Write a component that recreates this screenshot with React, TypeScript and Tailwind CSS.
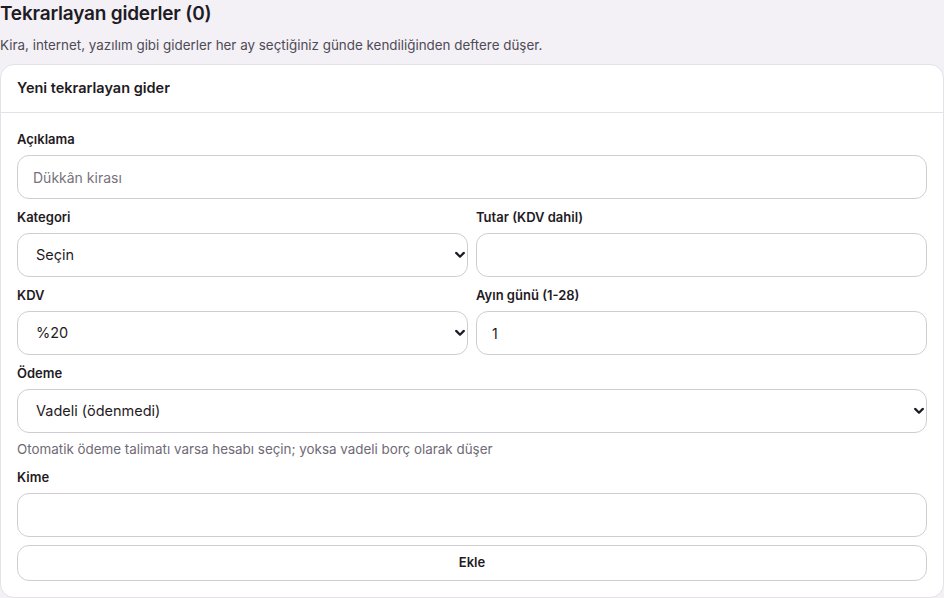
import React from "react";

const font = { fontFamily: "Inter, 'Noto Sans', sans-serif" };

function Label({ children }: { children: React.ReactNode }) {
  return <label className="block text-[13px] leading-5 font-semibold text-[#1f1b24] mb-1.5">{children}</label>;
}

const inputCls =
  "block w-full h-[44px] rounded-[12px] border border-[#cfcdd2] bg-white px-[15px] text-[14px] text-[#1f1b24] placeholder:text-[#77727c] outline-none";

function Select({ children, defaultValue }: { children: React.ReactNode; defaultValue: string }) {
  return (
    <div className="relative">
      <select
        defaultValue={defaultValue}
        className="block w-full h-[44px] appearance-none rounded-[12px] border border-[#cfcdd2] bg-white pl-[18px] pr-8 text-[14.5px] text-[#1f1b24] outline-none"
      >
        {children}
      </select>
      <svg
        className="pointer-events-none absolute right-[3px] top-1/2 -translate-y-1/2"
        width="10"
        height="7"
        viewBox="0 0 10 7"
        fill="none"
      >
        <path d="M1.2 1.4 L5 5.2 L8.8 1.4" stroke="#1f1b24" strokeWidth="2.2" strokeLinecap="round" strokeLinejoin="round" />
      </svg>
    </div>
  );
}

export default function App() {
  return (
    <div className="min-h-[598px] bg-[#f3f1f6] text-[#1f1b24]" style={font}>
      <h1 className="text-[19px] leading-7 font-semibold tracking-[-0.2px]">Tekrarlayan giderler (0)</h1>
      <p className="mt-[7px] text-[13.4px] leading-5 text-[#4f4a55]">
        Kira, internet, yazılım gibi giderler her ay seçtiğiniz günde kendiliğinden deftere düşer.
      </p>
      <div className="mt-[9px] rounded-[14px] border border-[#e4e1e8] bg-white">
        <div className="pt-[13px] pb-[14px] px-4 border-b border-[#e4e1e8]">
          <h2 className="text-[14.5px] leading-5 font-semibold">Yeni tekrarlayan gider</h2>
        </div>
        <div className="p-4 flex flex-col gap-2">
          <div>
            <Label>Açıklama</Label>
            <input className={inputCls} placeholder="Dükkân kirası" />
          </div>
          <div className="grid grid-cols-2 gap-2">
            <div>
              <Label>Kategori</Label>
              <Select defaultValue="">
                <option value="">Seçin</option>
              </Select>
            </div>
            <div>
              <Label>Tutar (KDV dahil)</Label>
              <input className={inputCls} />
            </div>
          </div>
          <div className="grid grid-cols-2 gap-2">
            <div>
              <Label>KDV</Label>
              <Select defaultValue="20">
                <option value="20">%20</option>
                <option value="10">%10</option>
                <option value="1">%1</option>
              </Select>
            </div>
            <div>
              <Label>Ayın günü (1-28)</Label>
              <input className={inputCls} defaultValue="1" />
            </div>
          </div>
          <div>
            <Label>Ödeme</Label>
            <Select defaultValue="v">
              <option value="v">Vadeli (ödenmedi)</option>
            </Select>
            <p className="mt-1.5 text-[13.4px] leading-5 text-[#6f6a75]">
              Otomatik ödeme talimatı varsa hesabı seçin; yoksa vadeli borç olarak düşer
            </p>
          </div>
          <div>
            <Label>Kime</Label>
            <input className={inputCls} />
          </div>
          <button className="h-[36px] w-full rounded-[12px] border border-[#cfcdd2] bg-white text-[13px] font-semibold text-[#1f1b24]">
            Ekle
          </button>
        </div>
      </div>
    </div>
  );
}
